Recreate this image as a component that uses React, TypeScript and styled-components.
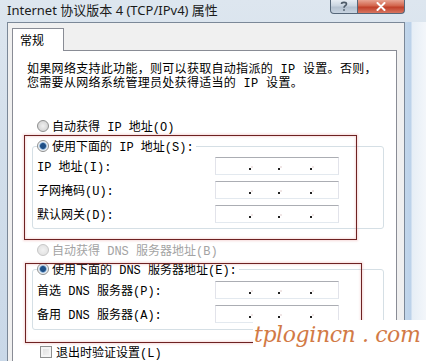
import * as React from 'react';
import styled, {createGlobalStyle} from 'styled-components';

const GlobalStyle = createGlobalStyle`
  html, body {
    margin: 0;
    padding: 0;
    background: #ffffff;
  }
`;

const textFont = `"Liberation Mono", "Noto Sans CJK SC", monospace`;

const Window = styled.div`
  position: relative;
  width: 426px;
  height: 361px;
  overflow: hidden;
  display: flex;
  flex-direction: column;
  background: linear-gradient(180deg, #dde6ef 0%, #d3dfeb 40%, #c9d8e8 100%);
`;

const TitleBar = styled.div`
  height: 22px;
  display: flex;
  justify-content: space-between;
  align-items: flex-start;
  padding: 0 21px 0 7px;
  flex-shrink: 0;
`;

const Title = styled.div`
  font-family: "Noto Sans", "Noto Sans CJK SC", sans-serif;
  font-size: 13px;
  line-height: 20px;
  color: #1b1b1b;
`;

const Captions = styled.div`
  display: flex;
  height: 14px;
`;

const CaptionButton = styled.div<{$close?: boolean; $w: number}>`
  width: ${(p) => p.$w}px;
  height: 14px;
  box-sizing: border-box;
  display: flex;
  align-items: center;
  justify-content: center;
  border: 1px solid #56677a;
  border-top: none;
  border-left: ${(p) => (p.$close ? 'none' : '1px solid #56677a')};
  border-radius: ${(p) => (p.$close ? '0 0 4px 0' : '0 0 0 4px')};
  background: ${(p) =>
    p.$close
      ? 'linear-gradient(180deg, #e8a493 0%, #d2644c 45%, #c0402a 55%, #d87560 100%)'
      : 'linear-gradient(180deg, #e6ecf3 0%, #c9d4e0 45%, #b4c1d0 55%, #c8d4e1 100%)'};
`;

const FrameRow = styled.div`
  flex: 1;
  display: flex;
  padding-left: 7px;
  min-height: 0;
`;

const Body = styled.div`
  width: 398px;
  box-sizing: border-box;
  background: #f0f0f0;
  border: 1px solid #7b8898;
  border-bottom: none;
  padding: 5px 7px 0 4px;
  display: flex;
  flex-direction: column;
`;

const RightFrame = styled.div`
  flex: 1;
  background: linear-gradient(90deg, #c2d6ea 0px, #bcd2ea 6px, #e6eef6 7px, #f3f6fa 100%);
`;

const Tab = styled.div`
  width: 52px;
  height: 23px;
  box-sizing: border-box;
  border: 1px solid #898c95;
  border-bottom: none;
  background: #ffffff;
  margin-bottom: -1px;
  position: relative;
  z-index: 1;
  padding-left: 7px;
  font-family: "Noto Sans CJK SC", sans-serif;
  font-size: 12px;
  line-height: 21px;
  color: #000;
`;

const Panel = styled.div`
  flex: 1;
  background: #ffffff;
  border: 1px solid #898c95;
  border-bottom: none;
  padding-left: 14px;
  display: flex;
  flex-direction: column;
  font-family: ${textFont};
  font-size: 12px;
  color: #000;
`;

const Intro = styled.p`
  margin: 12px 0 0 0;
  line-height: 14px;
  white-space: nowrap;
  letter-spacing: 0.3px;
`;

const OptionRow = styled.div<{$mt?: number; $pl?: number; $disabled?: boolean}>`
  display: flex;
  align-items: center;
  height: 16px;
  gap: 3px;
  margin-top: ${(p) => p.$mt ?? 0}px;
  padding-left: ${(p) => p.$pl ?? 0}px;
  color: ${(p) => (p.$disabled ? '#a3a3a3' : '#000')};
  white-space: nowrap;
`;

const Radio = styled.span<{$checked?: boolean; $disabled?: boolean}>`
  width: 12px;
  height: 12px;
  box-sizing: border-box;
  border-radius: 50%;
  border: 1px solid ${(p) => (p.$disabled ? '#c6c6c6' : '#8e8f8f')};
  flex-shrink: 0;
  background: ${(p) =>
    p.$checked
      ? 'radial-gradient(circle, #1f4f86 0 2.5px, #6f9cc9 3.2px, #dfeaf5 4px, #f4f4f4 5px)'
      : p.$disabled
      ? 'radial-gradient(circle, #f2f2f2 0, #e4e4e4 5px)'
      : 'radial-gradient(circle, #f0f0f0 0, #d6d6d6 5px)'};
`;

const Check = styled.span`
  width: 12px;
  height: 12px;
  box-sizing: border-box;
  border: 1px solid #8e8f8f;
  background: linear-gradient(135deg, #dcdcdc 0%, #f6f6f6 100%);
  box-shadow: inset 0 0 0 2px #f4f4f4;
  flex-shrink: 0;
  margin-right: 1px;
`;

const Group = styled.fieldset<{$mt: number; $pb: number; $w: number}>`
  margin: ${(p) => p.$mt}px 0 0 5px;
  width: ${(p) => p.$w}px;
  box-sizing: border-box;
  border: 1px solid #d5dfe5;
  border-radius: 3px;
  padding: 0 4px ${(p) => p.$pb}px 4px;
  min-width: 0;
`;

const Legend = styled.legend`
  padding: 0 2px 0 0;
  margin: 0;
`;

const Fields = styled.div<{$mt: number}>`
  display: grid;
  grid-template-columns: 178px 124px;
  grid-auto-rows: 18px;
  row-gap: 6px;
  margin-top: ${(p) => p.$mt}px;
  align-items: center;
`;

const Label = styled.span`
  white-space: nowrap;
`;

const IpBox = styled.div`
  height: 18px;
  box-sizing: border-box;
  border: 1px solid #e2e3ea;
  border-top-color: #abadb3;
  border-bottom-color: #e3e9ef;
  background: #ffffff;
  display: flex;
  align-items: flex-end;
  padding: 0 0 4px 33px;
`;

const Dot = styled.span<{$gap: number}>`
  width: 2px;
  height: 2px;
  background: #222;
  margin-left: ${(p) => p.$gap}px;
  box-shadow: 2px -2px 0 0 #f0e6e6;
`;

const Annotation = styled.div<{$x: number; $y: number; $w: number; $h: number}>`
  position: absolute;
  left: ${(p) => p.$x}px;
  top: ${(p) => p.$y}px;
  width: ${(p) => p.$w}px;
  height: ${(p) => p.$h}px;
  box-sizing: border-box;
  border: 1px solid #6e2222;
  box-shadow: 0 0 2px 1px rgba(230, 150, 150, 0.35), inset 0 0 2px 1px rgba(230, 150, 150, 0.3);
  pointer-events: none;
`;

const Watermark = styled.div`
  position: absolute;
  left: 253px;
  top: 320px;
  right: 0;
  bottom: 0;
  background: #ffffff;
  font-family: "DejaVu Serif", serif;
  font-style: italic;
  font-size: 22px;
  letter-spacing: -0.4px;
  line-height: 30px;
  padding-left: 1px;
  color: #d27a46;
  white-space: nowrap;
`;

const IpField = () => (
  <IpBox>
    <Dot $gap={0} />
    <Dot $gap={27} />
    <Dot $gap={30} />
  </IpBox>
);

const HelpIcon = () => (
  <svg width="8" height="11" viewBox="0 0 8 11">
    <path d="M1.5 3 C1.5 0.8 6.5 0.8 6.5 3 C6.5 4.6 4 4.8 4 6.8" fill="none" stroke="#4d5a68" strokeWidth="1.6" />
    <rect x="3.2" y="8.2" width="1.6" height="1.6" fill="#4d5a68" />
  </svg>
);

const CloseIcon = () => (
  <svg width="10" height="9" viewBox="0 0 10 9">
    <path d="M1.5 1 L8.5 8 M8.5 1 L1.5 8" stroke="#ffffff" strokeWidth="2" strokeLinecap="round" />
  </svg>
);

export default function App() {
  return (
    <>
      <GlobalStyle />
      <Window>
        <TitleBar>
          <Title>Internet 协议版本 4 (TCP/IPv4) 属性</Title>
          <Captions>
            <CaptionButton $w={28}><HelpIcon /></CaptionButton>
            <CaptionButton $w={47} $close><CloseIcon /></CaptionButton>
          </Captions>
        </TitleBar>
        <FrameRow>
          <Body>
            <Tab>常规</Tab>
            <Panel>
              <Intro>
                如果网络支持此功能，则可以获取自动指派的 IP 设置。否则，<br />
                您需要从网络系统管理员处获得适当的 IP 设置。
              </Intro>
              <OptionRow $mt={27} $pl={10}>
                <Radio />自动获得 IP 地址(O)
              </OptionRow>
              <Group $mt={4} $pb={5} $w={352}>
                <Legend>
                  <OptionRow>
                    <Radio $checked />使用下面的 IP 地址(S):
                  </OptionRow>
                </Legend>
                <Fields $mt={3}>
                  <Label>IP 地址(I):</Label>
                  <IpField />
                  <Label>子网掩码(U):</Label>
                  <IpField />
                  <Label>默认网关(D):</Label>
                  <IpField />
                </Fields>
              </Group>
              <OptionRow $mt={13} $pl={10} $disabled>
                <Radio $disabled />自动获得 DNS 服务器地址(B)
              </OptionRow>
              <Group $mt={3} $pb={6} $w={352}>
                <Legend>
                  <OptionRow>
                    <Radio $checked />使用下面的 DNS 服务器地址(E):
                  </OptionRow>
                </Legend>
                <Fields $mt={4}>
                  <Label>首选 DNS 服务器(P):</Label>
                  <IpField />
                  <Label>备用 DNS 服务器(A):</Label>
                  <IpField />
                </Fields>
              </Group>
              <OptionRow $mt={14} $pl={13}>
                <Check />退出时验证设置(L)
              </OptionRow>
            </Panel>
          </Body>
          <RightFrame />
        </FrameRow>
        <Annotation $x={24} $y={135} $w={333} $h={105} />
        <Annotation $x={25} $y={263} $w={337} $h={80} />
        <Watermark>tplogincn . com</Watermark>
      </Window>
    </>
  );
}
